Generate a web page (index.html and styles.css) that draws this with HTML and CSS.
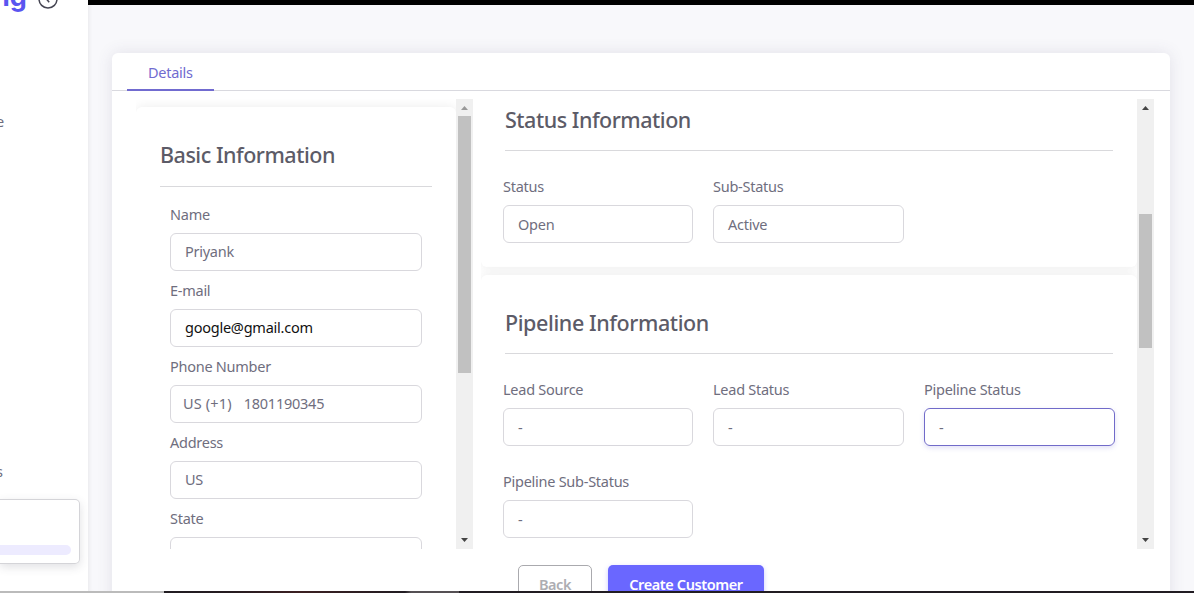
FILE: index.html
```html
<!DOCTYPE html>
<html lang="en">
<head>
<meta charset="utf-8">
<title>Create Customer</title>
<link rel="stylesheet" href="styles.css">
</head>
<body>
<div class="app">
  <aside class="sidebar">
    <div class="brand">
      <span class="brand-name">ng</span>
      <svg class="collapse" width="20" height="20" viewBox="0 0 20 20" fill="none" stroke="#454552" stroke-width="1.5"><circle cx="10" cy="10" r="9"/><path d="M11.800 6 8 9.500l3.200 3.700"/></svg>
    </div>
    <span class="nav-tail nav-first">e</span>
    <span class="nav-tail nav-second">s</span>
    <div class="usage"><div class="usage-bar"></div></div>
  </aside>
  <main class="main">
    <div class="topbar"></div>
    <section class="card">
      <nav class="tabs"><a class="tab">Details</a></nav>
      <div class="columns">
        <div class="pane pane-left">
          <div class="pane-body">
            <div class="block block-basic">
              <h2 class="title">Basic Information</h2>
              <div class="stack">
                <div class="field"><label class="label">Name</label><div class="input">Priyank</div></div>
                <div class="field"><label class="label">E-mail</label><div class="input filled">google@gmail.com</div></div>
                <div class="field"><label class="label">Phone Number</label><div class="input phone"><span>US (+1)</span><span class="number">1801190345</span></div></div>
                <div class="field"><label class="label">Address</label><div class="input">US</div></div>
                <div class="field"><label class="label">State</label><div class="input"></div></div>
              </div>
            </div>
          </div>
          <div class="scroll">
            <svg class="arrow dim" width="7" height="4" viewBox="0 0 7 4"><path d="M0 4 3.500 0 7 4z"/></svg>
            <div class="thumb thumb-left"></div>
            <svg class="arrow" width="7" height="4" viewBox="0 0 7 4"><path d="M0 0h7L3.500 4z"/></svg>
          </div>
        </div>
        <div class="pane pane-right">
          <div class="pane-body">
            <div class="block block-status">
              <h2 class="title">Status Information</h2>
              <div class="grid">
                <div class="field"><label class="label">Status</label><div class="input">Open</div></div>
                <div class="field"><label class="label">Sub-Status</label><div class="input">Active</div></div>
              </div>
            </div>
            <div class="block block-pipeline">
              <h2 class="title">Pipeline Information</h2>
              <div class="grid">
                <div class="field"><label class="label">Lead Source</label><div class="input">-</div></div>
                <div class="field"><label class="label">Lead Status</label><div class="input">-</div></div>
                <div class="field"><label class="label">Pipeline Status</label><div class="input focused">-</div></div>
                <div class="field"><label class="label">Pipeline Sub-Status</label><div class="input">-</div></div>
              </div>
            </div>
          </div>
          <div class="scroll">
            <svg class="arrow" width="7" height="4" viewBox="0 0 7 4"><path d="M0 4 3.500 0 7 4z"/></svg>
            <div class="thumb thumb-right"></div>
            <svg class="arrow" width="7" height="4" viewBox="0 0 7 4"><path d="M0 0h7L3.500 4z"/></svg>
          </div>
        </div>
      </div>
      <div class="actions">
        <button class="btn back">Back</button>
        <button class="btn create">Create Customer</button>
      </div>
    </section>
  </main>
</div>
<div class="edge"></div>
</body>
</html>
```

FILE: styles.css
```css
* { box-sizing: border-box; }
body {
  margin: 0;
  height: 593px;
  overflow: hidden;
  display: flex;
  flex-direction: column;
  font-family: "Noto Sans", "Open Sans", sans-serif;
  font-size: 14.5px;
  line-height: 22px;
  letter-spacing: -0.26px;
  color: #6f6e7e;
  background: #fff;
}
.app { display: flex; height: 591px; overflow: hidden; }
.sidebar {
  flex: none;
  width: 88px;
  display: flex;
  flex-direction: column;
  background: #fff;
  overflow: hidden;
}
.brand { display: flex; height: 20px; flex: none; }
.brand-name {
  flex: none;
  width: 45px;
  margin: -22px 0 0 -7px;
  font: 700 27px/38px Inter, sans-serif;
  letter-spacing: 0;
  color: #5a55f0;
}
.collapse { flex: none; margin-top: -11px; }
.nav-tail { flex: none; height: 22px; margin-left: -4px; }
.nav-first { margin-top: 90px; }
.nav-second { margin-top: 328px; }
.usage {
  flex: none;
  display: flex;
  align-items: flex-end;
  width: 80px;
  height: 65px;
  margin-top: 17px;
  padding: 0 8px 8px 0;
  border: 1px solid #d4d4d8;
  border-left: 0;
  border-radius: 0 5px 5px 0;
  box-shadow: 0 3px 10px rgba(60, 60, 80, .16);
}
.usage-bar { width: 100%; height: 10px; border-radius: 0 5px 5px 0; background: #edebff; }
.main {
  flex: 1;
  display: flex;
  flex-direction: column;
  min-width: 0;
  background: #f8f8fb;
  box-shadow: inset 4px 0 4px -3px rgba(0, 0, 0, .07);
}
.topbar { flex: none; height: 5px; background: #000; }
.card {
  flex: none;
  height: 570px;
  margin: 48px 24px 0;
  border-radius: 6px;
  background: #fff;
  box-shadow: 0 0 16px rgba(75, 70, 110, .13);
}
.tabs { display: flex; height: 38px; padding-left: 15px; border-bottom: 1px solid #d9d9df; }
.tab {
  width: 87px;
  height: 38px;
  padding: 8px 0 0 21px;
  color: #716bd0;
  border-bottom: 2px solid #716bd0;
}
.columns { display: flex; gap: 8px; height: 450px; margin: 8px 16px 0 24px; }
.pane { display: flex; min-height: 0; overflow: hidden; }
.pane-left { width: 337px; }
.pane-right { width: 673px; }
.pane-body { flex: 1; min-width: 0; overflow: hidden; }
.block { border-radius: 6px; background: #fff; box-shadow: 0 0 12px rgba(0, 0, 0, .08); }
.block-basic { height: 600px; margin-top: 8px; padding: 33px 24px 0; }
.block-status { height: 168px; padding: 6px 24px 0; border-radius: 0 0 6px 6px; }
.block-pipeline { height: 400px; margin-top: 8px; padding: 33px 24px 0; }
.title {
  margin: 0;
  height: 46px;
  border-bottom: 1px solid #d9d9dc;
  font-size: 21.500px;
  font-weight: 500;
  line-height: 30px;
  letter-spacing: -0.48px;
  color: #5c5b67;
}
.block-pipeline .title { letter-spacing: -0.4px; }
.block-basic .title { height: 47px; }
.stack { padding: 16px 10px 0; }
.stack .field { height: 76px; }
.grid {
  display: grid;
  grid-template-columns: 190px 191px 191px;
  column-gap: 20px;
  row-gap: 24px;
  margin: 0 -2px;
  padding-top: 24px;
}
.label { display: block; height: 30px; }
.input {
  height: 38px;
  padding: 7px 14px;
  border: 1px solid #d9d8dd;
  border-radius: 6px;
}
.stack .input { padding-top: 6px; }
.filled { color: #111; letter-spacing: -0.24px; }
.stack .phone { display: flex; gap: 12px; padding-left: 12px; letter-spacing: 0.15px; }
.number { letter-spacing: -0.24px; }
.focused { border-color: #716bc9; box-shadow: 0 2px 5px rgba(105, 100, 210, .2); }
.scroll {
  flex: none;
  width: 17px;
  height: 450px;
  display: flex;
  flex-direction: column;
  align-items: center;
  justify-content: space-between;
  padding: 7px 0;
  background: #f0f0f0;
}
.arrow { flex: none; fill: #444; }
.dim { fill: #999; }
.thumb { width: 13px; background: #c1c1c1; }
.thumb-left { height: 257px; margin: 6px 0 auto; }
.thumb-right { height: 134px; margin: 104px 0 auto; }
.actions { display: flex; gap: 16px; margin: 16px 0 0 406px; }
.btn {
  height: 38px;
  padding: 0;
  border-radius: 5px;
  font: 600 14.500px/22px "Noto Sans", sans-serif;
  letter-spacing: -0.4px;
}
.back { width: 74px; border: 1px solid #aaaaae; background: #fff; color: #adadb2; }
.create { width: 156px; border: 0; background: #6a67ff; color: #fff; box-shadow: 0 2px 5px rgba(106, 103, 255, .35); }
.edge {
  height: 2px;
  background: linear-gradient(90deg, #bbb 164px, #211c22 164px, #251b20 230px, #3c2022 300px, #211c22 405px, #555054 411px, #555054 459px, #211c22 459px);
}
```
